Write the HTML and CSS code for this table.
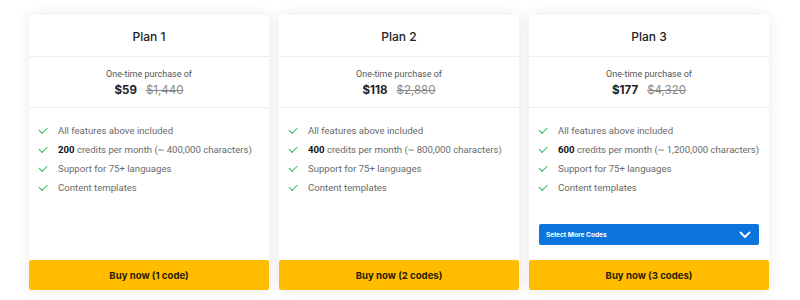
FILE: index.html
```html
<!DOCTYPE html>
<html>
<head>
<meta charset="utf-8">
<link rel="stylesheet" href="styles.css">
</head>
<body>
<div class="plans">
  <div class="card">
    <div class="title">Plan 1</div>
    <div class="price">
      <div class="once">One-time purchase of</div>
      <div class="amounts"><span class="now">$59</span><span class="was">$1,440</span></div>
    </div>
    <ul class="features">
      <li><span class="check"></span><span class="txt">All features above included</span></li>
      <li><span class="check"></span><span class="txt"><b>200</b> credits per month (~ 400,000 characters)</span></li>
      <li><span class="check"></span><span class="txt">Support for 75+ languages</span></li>
      <li><span class="check"></span><span class="txt">Content templates</span></li>
    </ul>
    <div class="spacer"></div>
    <button class="buy">Buy now (1 code)</button>
  </div>
  <div class="card">
    <div class="title">Plan 2</div>
    <div class="price">
      <div class="once">One-time purchase of</div>
      <div class="amounts"><span class="now">$118</span><span class="was">$2,880</span></div>
    </div>
    <ul class="features">
      <li><span class="check"></span><span class="txt">All features above included</span></li>
      <li><span class="check"></span><span class="txt"><b>400</b> credits per month (~ 800,000 characters)</span></li>
      <li><span class="check"></span><span class="txt">Support for 75+ languages</span></li>
      <li><span class="check"></span><span class="txt">Content templates</span></li>
    </ul>
    <div class="spacer"></div>
    <button class="buy">Buy now (2 codes)</button>
  </div>
  <div class="card">
    <div class="title">Plan 3</div>
    <div class="price">
      <div class="once">One-time purchase of</div>
      <div class="amounts"><span class="now">$177</span><span class="was">$4,320</span></div>
    </div>
    <ul class="features">
      <li><span class="check"></span><span class="txt">All features above included</span></li>
      <li><span class="check"></span><span class="txt"><b>600</b> credits per month (~ 1,200,000 characters)</span></li>
      <li><span class="check"></span><span class="txt">Support for 75+ languages</span></li>
      <li><span class="check"></span><span class="txt">Content templates</span></li>
    </ul>
    <div class="spacer"></div>
    <div class="select">
      <span>Select More Codes</span>
      <svg width="12" height="8" viewBox="0 0 12 8"><path d="M1.5 1.5 L6 6 L10.5 1.5" fill="none" stroke="#fff" stroke-width="1.8" stroke-linecap="round" stroke-linejoin="round"/></svg>
    </div>
    <button class="buy">Buy now (3 codes)</button>
  </div>
</div>
</body>
</html>
```
FILE: styles.css
```css
* { box-sizing: border-box; }
html, body { margin: 0; padding: 0; background: #ffffff; }
body { width: 800px; height: 300px; overflow: hidden; font-family: Roboto, "Liberation Sans", sans-serif; }
.plans {
  display: grid;
  grid-template-columns: 240px 240px 240px;
  column-gap: 10px;
  padding: 15px 0 0 29px;
}
.card {
  background: #fff;
  height: 275px;
  display: flex;
  flex-direction: column;
  box-shadow: 0 0 14px rgba(0,0,0,0.09);
  border-radius: 3px;
}
.title {
  height: 42px;
  display: flex;
  align-items: center;
  justify-content: center;
  padding-top: 2px;
  font-family: Inter, Roboto, sans-serif;
  font-weight: 500;
  font-size: 12px;
  color: #222;
  border-bottom: 1px solid #eeeeee;
}
.price {
  height: 51px;
  border-bottom: 1px solid #eeeeee;
  display: flex;
  flex-direction: column;
  align-items: center;
  padding-top: 11px;
}
.once { font-size: 9px; color: #555; line-height: 12px; }
.amounts { display: flex; gap: 9px; margin-top: 3px; line-height: 15px; }
.now { font-weight: 700; font-size: 11.5px; color: #222; font-family: Inter, Roboto, sans-serif; }
.was { font-size: 11.5px; color: #888; text-decoration: line-through; font-family: Inter, Roboto, sans-serif; }
.features {
  list-style: none;
  margin: 0;
  padding: 13px 0 0 9px;
}
.features li {
  display: flex;
  align-items: center;
  height: 19px;
  font-size: 9.6px;
  color: #6a6a6a;
  white-space: nowrap;
}
.features b { color: #111; font-weight: 700; }
.check {
  width: 8px;
  height: 4.5px;
  border-left: 1.4px solid #33b863;
  border-bottom: 1.4px solid #33b863;
  transform: rotate(-45deg);
  margin: -2px 11px 0 1px;
  flex: none;
}
.spacer { flex: 1; }
.select {
  margin: 0 10px 15px 10px;
  height: 21px;
  background: #0b74dd;
  border-radius: 2px;
  display: flex;
  align-items: center;
  justify-content: space-between;
  padding: 0 8px 0 7px;
  color: #fff;
  font-family: Inter, Roboto, sans-serif;
  font-weight: 700;
  font-size: 6.6px;
}
.buy {
  height: 30px;
  border: none;
  border-radius: 2px;
  background: #ffbc00;
  color: #2a2200;
  font-family: Inter, Roboto, sans-serif;
  font-weight: 700;
  font-size: 9.6px;
  width: 100%;
  padding: 0;
  cursor: pointer;
}
```
